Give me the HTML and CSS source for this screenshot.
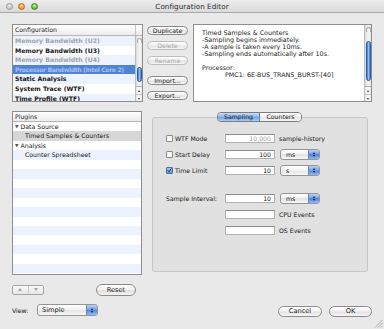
FILE: index.html
```html
<!DOCTYPE html>
<html>
<head>
<meta charset="utf-8">
<link rel="stylesheet" href="styles.css">
</head>
<body>
<div class="window">
  <div class="titlebar">
    <div class="lights">
      <span class="light close"></span>
      <span class="light min"></span>
      <span class="light max"></span>
    </div>
    <div class="title">Configuration Editor</div>
    <div></div>
  </div>
  <div class="content">
    <div class="top">
      <div class="table config">
        <div class="thead"><span class="th">Configuration</span><span class="corner"></span></div>
        <div class="tbody">
          <div class="rows stripes-even">
            <div class="row bold dim">Memory Bandwidth (U2)</div>
            <div class="row bold">Memory Bandwidth (U3)</div>
            <div class="row bold dim">Memory Bandwidth (U4)</div>
            <div class="row bold sel">Processor Bandwidth (Intel Core 2)</div>
            <div class="row bold">Static Analysis</div>
            <div class="row bold">System Trace (WTF)</div>
            <div class="row bold">Time Profile (WTF)</div>
          </div>
          <div class="vscroll s1">
            <span class="cap"></span>
            <span class="thumb"></span>
            <span class="arrows"><span class="up"></span><span class="down"></span></span>
          </div>
        </div>
      </div>
      <div class="btncol">
        <button class="pill">Duplicate</button>
        <button class="pill disabled">Delete</button>
        <button class="pill disabled">Rename</button>
        <button class="pill gap">Import...</button>
        <button class="pill">Export...</button>
      </div>
      <div class="textview">
        <div class="text">
          <p>Timed Samples &amp; Counters</p>
          <p>-Sampling begins immediately.</p>
          <p>-A sample is taken every 10ms.</p>
          <p>-Sampling ends automatically after 10s.</p>
          <p>&nbsp;</p>
          <p>Processor:</p>
          <p class="indent">PMC1: 6E-BUS_TRANS_BURST-[40]</p>
        </div>
        <div class="vscroll s2">
          <span class="cap"></span>
          <span class="thumb"></span>
          <span class="arrows"><span class="up"></span><span class="down"></span></span>
        </div>
      </div>
    </div>

    <div class="middle">
      <div class="leftcol">
        <div class="table plugins">
          <div class="thead short"><span class="th">Plugins</span></div>
          <div class="rows stripes-odd">
            <div class="row"><span class="tri">&#9660;</span>Data Source</div>
            <div class="row lvl2 grey">Timed Samples &amp; Counters</div>
            <div class="row"><span class="tri">&#9660;</span>Analysis</div>
            <div class="row lvl2">Counter Spreadsheet</div>
          </div>
        </div>
        <div class="arrowrow">
          <div class="updown">
            <span class="seg"><span class="tup"></span></span>
            <span class="seg"><span class="tdown"></span></span>
          </div>
          <button class="pill reset">Reset</button>
        </div>
      </div>
      <div class="rightcol">
        <div class="tabbox">
          <div class="segmented">
            <span class="segbtn on">Sampling</span>
            <span class="segbtn">Counters</span>
          </div>
          <div class="form">
            <div class="frow">
              <div class="fl"><span class="cb"></span>WTF Mode</div>
              <span class="field dis">10,000</span>
              <span class="after">sample-history</span>
            </div>
            <div class="frow">
              <div class="fl"><span class="cb"></span>Start Delay</div>
              <span class="field">100</span>
              <span class="popup"><span class="pv">ms</span><span class="pa"><span class="au"></span><span class="ad"></span></span></span>
            </div>
            <div class="frow">
              <div class="fl"><span class="cb on"><svg width="7" height="7" viewBox="0 0 7 7"><path d="M1.2 3.4 L2.8 5.4 L6 0.6" fill="none" stroke="#1a1a1a" stroke-width="1.2"/></svg></span>Time Limit</div>
              <span class="field">10</span>
              <span class="popup"><span class="pv">s</span><span class="pa"><span class="au"></span><span class="ad"></span></span></span>
            </div>
            <div class="frow spaced">
              <div class="fl">Sample Interval:</div>
              <span class="field">10</span>
              <span class="popup"><span class="pv">ms</span><span class="pa"><span class="au"></span><span class="ad"></span></span></span>
            </div>
            <div class="frow">
              <div class="fl"></div>
              <span class="field"></span>
              <span class="after">CPU Events</span>
            </div>
            <div class="frow">
              <div class="fl"></div>
              <span class="field"></span>
              <span class="after">OS Events</span>
            </div>
          </div>
        </div>
      </div>
    </div>

    <div class="footer">
      <span class="viewlbl">View:</span>
      <span class="popup view"><span class="pv">Simple</span><span class="pa"><span class="au"></span><span class="ad"></span></span></span>
      <span class="spacer"></span>
      <button class="pill dlg cancel">Cancel</button>
      <button class="pill dlg ok">OK</button>
    </div>
  </div>
  <svg class="grip" width="9" height="9" viewBox="0 0 9 9">
    <path d="M8.5 1 L1 8.5 M8.5 4 L4 8.5 M8.5 7 L7 8.5" stroke="#9a9a9a" stroke-width="0.8" fill="none"/>
  </svg>
</div>
</body>
</html>
```

FILE: styles.css
```css
* { box-sizing: border-box; margin: 0; padding: 0; }
html, body { width: 384px; height: 329px; overflow: hidden; }
body {
  font-family: "DejaVu Sans", "Liberation Sans", sans-serif;
  font-size: 6.2px;
  color: #161616;
  background: #e9e9e9;
}
.window {
  width: 384px; height: 329px;
  display: flex; flex-direction: column;
  position: relative;
  background: #e9e9e9;
}

/* title bar */
.titlebar {
  height: 13px; flex: none;
  display: grid; grid-template-columns: 1fr auto 1fr; align-items: center;
  background: linear-gradient(#ededed, #dadada);
  border-bottom: 1px solid #a8a8a8;
}
.lights { display: flex; gap: 5.5px; padding-left: 5.5px; }
.light { width: 7px; height: 7px; border-radius: 50%; display: block; }
.light.close { background: radial-gradient(circle at 50% 35%, #f4f4f4, #c2c2c2 70%); border: 0.6px solid #9c9c9c; }
.light.min { background: radial-gradient(circle at 50% 35%, #fde29a, #f09c2a 60%, #d07a10); border: 0.6px solid #b0701c; }
.light.max { background: radial-gradient(circle at 50% 35%, #c9f2a6, #63c045 60%, #3a9126); border: 0.6px solid #3b8a2a; }
.title { font-size: 7.2px; color: #2a2a2a; letter-spacing: 0.05px; }

.content { flex: 1; padding: 11px 12px 0 12px; display: flex; flex-direction: column; }

/* top section */
.top { display: flex; height: 78px; }
.table { border: 1px solid #8e8e8e; background: #fff; display: flex; flex-direction: column; overflow: hidden; }
.config { width: 131px; }
.thead {
  height: 11px; flex: none; display: flex;
  border-bottom: 1px solid #b6b6b6;
  background: linear-gradient(#ffffff, #ececec);
}
.thead.short { height: 10px; }
.th { flex: 1; padding-left: 2px; line-height: 10px; color: #1a1a1a; }
.thead.short .th { line-height: 9px; }
.corner { width: 7px; border-left: 1px solid #c4c4c4; }
.tbody { flex: 1; display: flex; min-height: 0; }
.rows { flex: 1; min-width: 0; }
.stripes-even { background: repeating-linear-gradient(#edf3fe 0 9.6px, #ffffff 9.6px 19.2px); }
.stripes-odd { background: repeating-linear-gradient(#ffffff 0 9.45px, #edf3fe 9.45px 18.9px); flex: 1; }
.config .row { height: 9.6px; line-height: 9.6px; }
.row { height: 9.45px; line-height: 9.45px; padding-left: 2px; white-space: nowrap; overflow: hidden; }
.bold { font-weight: bold; }
.dim { color: #a3a3a3; }
.row.sel { background: #4f83d8; color: #a9bfe6; letter-spacing: -0.4px; }
.row.grey { background: #d6d6d6; }
.row.lvl2 { padding-left: 12px; }
.tri { font-size: 4.5px; color: #555; display: inline-block; width: 5px; margin-right: 0.5px; vertical-align: 1px; }

/* scrollbars */
.vscroll {
  width: 7px; flex: none; display: flex; flex-direction: column; align-items: center;
  border-left: 1px solid #bdbdbd;
  background: linear-gradient(to right, #d9d9d9, #f6f6f6 55%, #e6e6e6);
}
.cap { width: 5px; height: 5px; margin-top: 2px; border: 0.6px solid #a9a9a9; border-bottom: none; border-radius: 3px 3px 0 0; background: linear-gradient(to right, #e8e8e8, #fff); }
.thumb { width: 5px; border-radius: 2.5px; background: linear-gradient(to right, #2c68c8, #9cc6f6 45%, #5d97e8 80%, #3c74cf); border: 0.5px solid #2a5ca8; }
.s1 .thumb { margin-top: 24px; height: 15px; }
.s2 .thumb { margin-top: 9px; height: 40px; }
.arrows { margin-top: auto; width: 6px; display: flex; flex-direction: column; border-top: 1px solid #b0b0b0; }
.arrows .up, .arrows .down { height: 7px; position: relative; background: linear-gradient(to right, #e4e4e4, #fdfdfd 50%, #e8e8e8); }
.arrows .down { border-top: 1px solid #c0c0c0; }
.arrows .up::after, .arrows .down::after { content: ""; position: absolute; left: 1.5px; top: 2.5px; border-left: 1.5px solid transparent; border-right: 1.5px solid transparent; }
.arrows .up::after { border-bottom: 2px solid #333; }
.arrows .down::after { border-top: 2px solid #333; }

/* buttons */
.btncol { width: 41px; margin-left: 4px; display: flex; flex-direction: column; padding-top: 2px; gap: 6px; }
.pill {
  font: inherit; height: 9px; border: 1px solid #8b8b8b; border-radius: 5px;
  background: linear-gradient(#ffffff, #f3f3f3 45%, #e2e2e2 55%, #f6f6f6);
  color: #1b1b1b; line-height: 7px; padding: 0; text-align: center;
}
.pill.disabled { color: #a9a9a9; border-color: #bdbdbd; }
.pill.gap { margin-top: 5px; }
.textview { flex: 1; margin-left: 5px; border: 1px solid #8e8e8e; background: #fff; display: flex; }
.text { flex: 1; padding: 3.5px 0 0 8px; line-height: 7px; font-size: 6.35px; color: #1c1c1c; white-space: nowrap; }
.text .indent { padding-left: 23px; }

/* middle */
.middle { display: flex; margin-top: 9px; }
.leftcol { width: 130px; display: flex; flex-direction: column; }
.plugins { height: 164px; }
.arrowrow { height: 13px; margin-top: 8px; display: flex; align-items: center; justify-content: space-between; padding-right: 6px; }
.updown { width: 32px; height: 10px; display: flex; border: 1px solid #a6a6a6; border-radius: 2px; background: linear-gradient(#fafafa, #e6e6e6); }
.seg { flex: 1; display: flex; align-items: center; justify-content: center; }
.seg + .seg { border-left: 1px solid #c9c9c9; }
.tup { border-left: 2px solid transparent; border-right: 2px solid transparent; border-bottom: 3px solid #a3a3a3; }
.tdown { border-left: 2px solid transparent; border-right: 2px solid transparent; border-top: 3px solid #a3a3a3; }
.pill.reset { width: 40px; height: 12px; line-height: 10px; border-radius: 6px; font-size: 6.6px; }

.rightcol { width: 216px; margin-left: 10px; }
.tabbox {
  margin-top: 6px; height: 155px; position: relative;
  background: #e1e1e1; border: 1px solid #c6c6c6; border-radius: 3px;
}
.segmented {
  position: absolute; left: 64px; top: -6px;
  display: flex; height: 10px; width: 85px;
  border: 1px solid #7d7d7d; border-radius: 4px; overflow: hidden;
}
.segbtn { flex: 1; text-align: center; line-height: 8px; background: linear-gradient(#ffffff, #f2f2f2 50%, #e3e3e3 50%, #f4f4f4); }
.segbtn.on { background: linear-gradient(#c9dcf6, #8db6ec 50%, #6c9fe6 50%, #a7cdf6); border-right: 1px solid #6a7fa0; }
.form { padding: 12px 0 0 13px; display: flex; flex-direction: column; }
.frow { height: 16px; display: flex; align-items: center; }
.frow.spaced { margin-top: 12px; }
.fl { width: 59px; display: flex; align-items: center; white-space: nowrap; }
.cb {
  width: 7px; height: 7px; margin-right: 2px; flex: none;
  border: 0.8px solid #8a8a8a; border-radius: 1px;
  background: linear-gradient(#f2f2f2, #ffffff);
  display: flex; align-items: center; justify-content: center;
}
.cb.on { background: linear-gradient(#a9cbf4, #5d95e4); border-color: #4a6f9e; }
.cb svg { display: block; }
.field {
  width: 50px; height: 9px; flex: none;
  background: #fff; border: 0.6px solid #b1b1b1; border-top-color: #8c8c8c;
  text-align: right; padding-right: 3px; line-height: 8px; color: #1b1b1b;
}
.field.dis { color: #9b9b9b; }
.after { margin-left: 4px; white-space: nowrap; }
.popup {
  margin-left: 5px; width: 40px; height: 11px; flex: none;
  display: flex; border: 0.8px solid #959595; border-radius: 3px; overflow: hidden;
  background: linear-gradient(#ffffff, #f1f1f1 50%, #e4e4e4 50%, #f7f7f7);
}
.pv { flex: 1; padding-left: 5px; line-height: 9.5px; }
.pa {
  width: 11px; display: flex; flex-direction: column; align-items: center; justify-content: center; gap: 1px;
  background: linear-gradient(#b7d2f6, #6e9fe6 50%, #4c86de 50%, #8fbbf2);
  border-left: 0.6px solid #6b86b0;
}
.au { border-left: 1.5px solid transparent; border-right: 1.5px solid transparent; border-bottom: 2px solid #111; }
.ad { border-left: 1.5px solid transparent; border-right: 1.5px solid transparent; border-top: 2px solid #111; }

/* footer */
.footer { margin-top: 8px; height: 12px; display: flex; align-items: center; }
.viewlbl { width: 25px; }
.popup.view { margin-left: 0; width: 61px; height: 12px; }
.popup.view .pv { line-height: 10.5px; padding-left: 4px; font-size: 6.6px; }
.spacer { flex: 1; }
.pill.dlg { height: 11px; line-height: 9px; border-radius: 6px; font-size: 6.6px; margin-top: 2px; }
.cancel { width: 44px; }
.ok { width: 43px; margin-left: 7px; }

.grip { position: absolute; right: 1px; bottom: 1px; }
```
